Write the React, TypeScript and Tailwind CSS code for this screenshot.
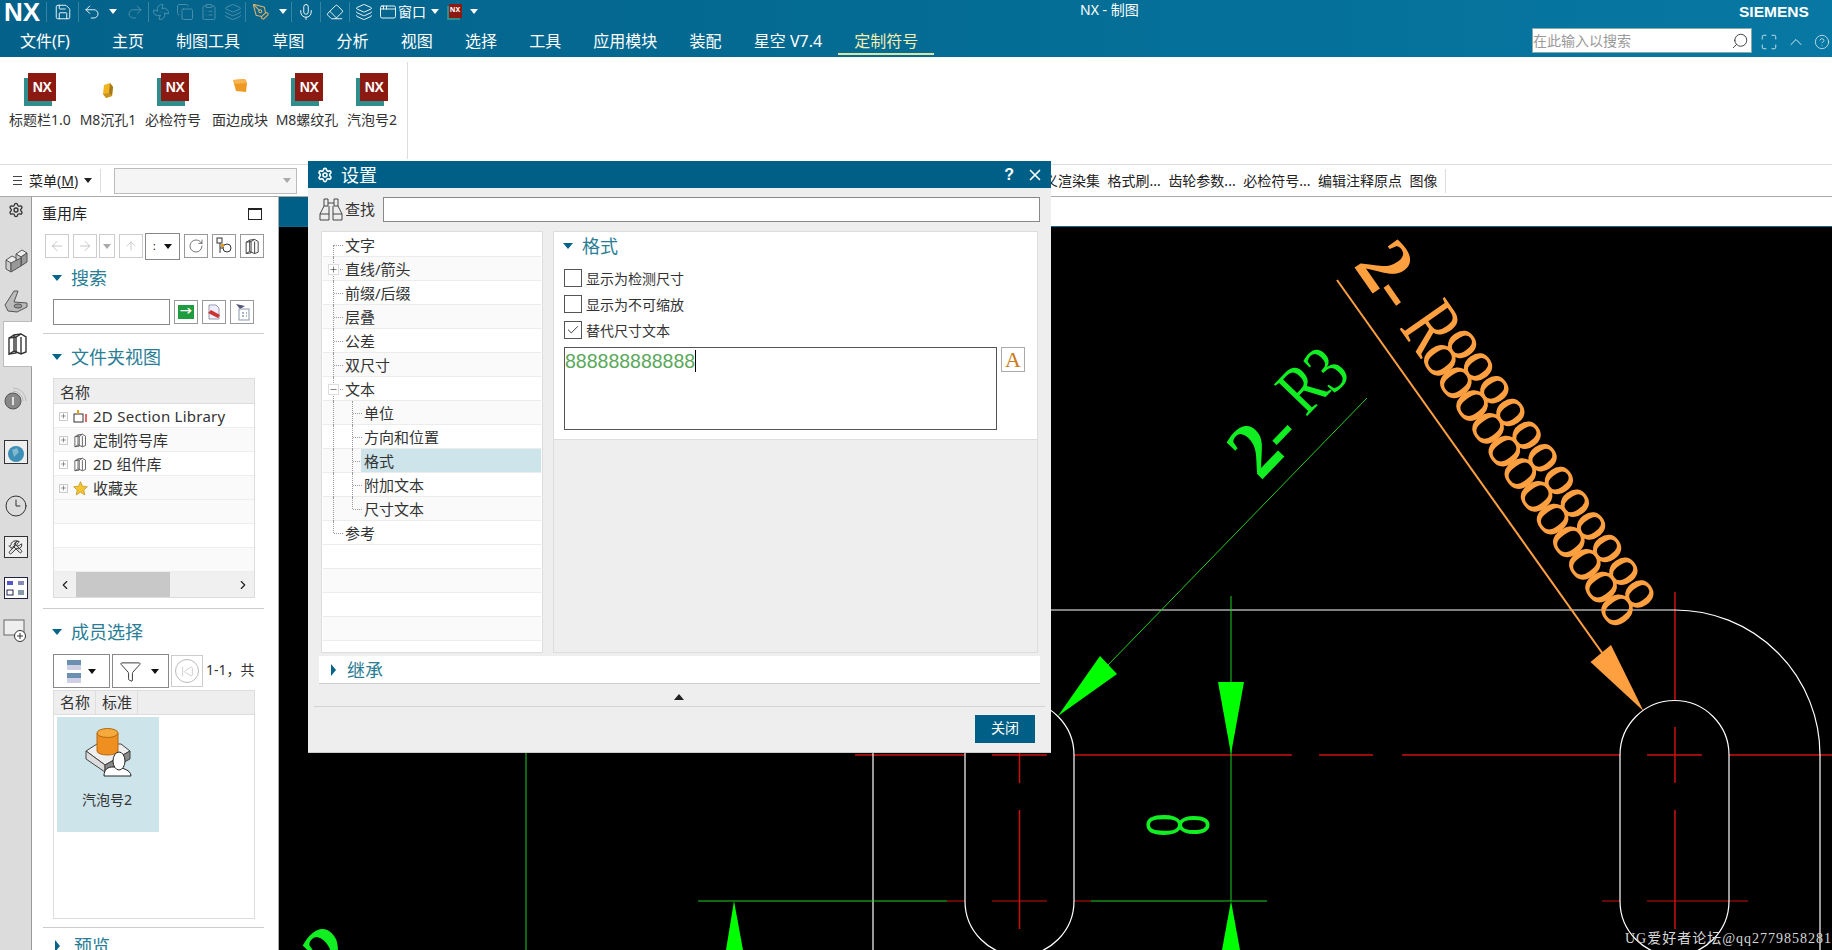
import { Save, Undo2, Redo2, Fan, Copy, ClipboardList, Mic, Eraser, Layers, AppWindow, PenTool, Search, Maximize, ChevronUp, CircleHelp, ChevronLeft, ChevronRight, Settings, X, RotateCw, ArrowLeft, ArrowRight, ArrowUp, Funnel, SkipBack, Check, Wrench, Hammer, Clock3, Plus, Minus } from "lucide-react";

const FONT = "[font-family:'Noto_Sans','Noto_Sans_CJK_SC',sans-serif]";

function Sep() {
	return <div className="w-px h-[20px] bg-white/20 shrink-0" />;
}

function Slot({ w, children, dim }: { w: string; children?: React.ReactNode; dim?: boolean }) {
	return <div className={`${w} flex justify-center items-center shrink-0 ${dim ? "opacity-30" : ""}`}>{children}</div>;
}

function Drop({ className = "border-t-white" }: { className?: string }) {
	return <div className={`w-0 h-0 border-x-[4px] border-x-transparent border-t-[5px] ${className}`} />;
}

function Tri({ open }: { open: boolean }) {
	return open ? (
		<div className="w-0 h-0 border-x-[5.5px] border-x-transparent border-t-[6px] border-t-[#04648a]" />
	) : (
		<div className="w-0 h-0 border-y-[6px] border-y-transparent border-l-[5px] border-l-[#04648a]" />
	);
}

function BookIcon({ size = 16, color = "#555" }: { size?: number; color?: string }) {
	return (
		<svg width={size} height={size} viewBox="0 0 24 24" fill="none" stroke={color} strokeWidth="1.4">
			<path d="M3 6 8 3 8 19 3 22Z" />
			<path d="M8 3 15 2 20 5 20 20 15 22 8 19" />
			<path d="M3 6 10 5 15 2M10 5V21L3 22M15 5V22" />
		</svg>
	);
}

function MiniNx({ big }: { big?: boolean }) {
	if (!big) {
		return (
			<div className="relative w-[15px] h-[16px]">
				<div className="absolute left-0 top-[2px] w-[13px] h-[14px] bg-[#2f8d8d]" />
				<div className="absolute left-[2px] top-0 w-[13px] h-[14px] bg-[#8c1a10] flex items-center justify-center text-white text-[7px] font-bold">NX</div>
			</div>
		);
	}
	return (
		<div className="relative w-[32px] h-[33px]">
			<div className="absolute left-0 top-[5px] w-[28px] h-[28px] bg-[#2f8d8d]" />
			<div className="absolute left-[4px] top-0 w-[28px] h-[28px] bg-[#8c1a10] flex items-center justify-center text-white text-[14px] font-bold tracking-[-0.5px] [font-family:'Liberation_Sans',sans-serif]">NX</div>
		</div>
	);
}

function TitleBar() {
	const ic = { size: 18, strokeWidth: 1.2, color: "#fff" };
	return (
		<div className="h-[23px] flex items-center pl-[4px] relative">
			<div className="w-[42px] h-[26px] text-white text-[26px] font-bold leading-[26px] [font-family:'Liberation_Sans',sans-serif]">NX</div>
			<Sep />
			<Slot w="w-[31px]"><Save {...ic} /></Slot>
			<Sep />
			<Slot w="w-[26px]"><Undo2 {...ic} /></Slot>
			<Slot w="w-[16px]"><Drop /></Slot>
			<Slot w="w-[27px]" dim><Redo2 {...ic} /></Slot>
			<Sep />
			<Slot w="w-[24px]" dim><Fan {...ic} /></Slot>
			<Slot w="w-[24px]" dim><Copy {...ic} /></Slot>
			<Slot w="w-[24px]" dim><ClipboardList {...ic} /></Slot>
			<Slot w="w-[24px]" dim><Layers {...ic} /></Slot>
			<Sep />
			<Slot w="w-[29px]"><PenTool size={18} strokeWidth={1.4} color="#e2b26c" /></Slot>
			<Slot w="w-[16px]"><Drop /></Slot>
			<Sep />
			<Slot w="w-[28px]"><Mic {...ic} /></Slot>
			<Sep />
			<Slot w="w-[28px]"><Eraser {...ic} /></Slot>
			<Sep />
			<Slot w="w-[28px]"><Layers {...ic} /></Slot>
			<Slot w="w-[20px]"><AppWindow {...ic} /></Slot>
			<div className="w-[30px] text-white text-[14px] leading-none shrink-0">窗口</div>
			<Slot w="w-[14px]"><Drop /></Slot>
			<Slot w="w-[24px]"><MiniNx /></Slot>
			<Slot w="w-[16px]"><Drop /></Slot>
			<div className="absolute left-[1080px] -top-[2px] h-[23px] flex items-center text-white text-[14px]">NX - 制图</div>
			<div className="absolute left-[1739px] top-0 h-[23px] flex items-center text-white text-[15.5px] font-bold [font-family:'Liberation_Sans',sans-serif]">SIEMENS</div>
		</div>
	);
}

function TabBar() {
	const tabs = ["主页", "制图工具", "草图", "分析", "视图", "选择", "工具", "应用模块", "装配", "星空 V7.4"];
	return (
		<div className="h-[34px] flex items-start pt-[6px] pl-[20px] text-white text-[16px] leading-[24px] relative">
			<div className="mr-[42px]">文件(F)</div>
			<div className="flex gap-[32.2px]">
				{tabs.map((t) => (
					<div key={t} className="whitespace-nowrap">{t}</div>
				))}
				<div className="relative text-[#f2eeb0]">
					定制符号
					<div className="absolute -left-[16px] -right-[16px] top-[24px] h-[2px] bg-[#d9e6a0]" />
				</div>
			</div>
			<div className="absolute left-[1532px] top-[5px] w-[220px] h-[25px] bg-white border border-[#8aa] flex items-center justify-between pr-[2px] text-[14px] text-[#999]">
				在此输入以搜索
				<Search size={18} strokeWidth={1.2} color="#333" className="-scale-x-100" />
			</div>
			<div className="absolute left-[1760px] top-[9px] flex items-center gap-[8px]">
				<Maximize size={18} strokeWidth={1} color="#fff" />
				<ChevronUp size={20} strokeWidth={1} color="#fff" />
				<CircleHelp size={16} strokeWidth={1} color="#fff" />
			</div>
		</div>
	);
}

function GoldBlock({ small }: { small?: boolean }) {
	return small ? (
		<svg width="14" height="18" viewBox="0 0 14 18" className="mt-[9px]">
			<path d="M3 3 9 1 12 5 11 14 5 16 2 12Z" fill="#f0b420" />
			<path d="M9 1 12 5 11 14 8 11Z" fill="#a5781a" />
			<path d="M2 12 8 11 11 14 5 16Z" fill="#c89320" />
		</svg>
	) : (
		<svg width="16" height="16" viewBox="0 0 16 16" className="mt-[5px]">
			<path d="M1 2 13 1 15 5 14 14 4 13Z" fill="#ee9a22" />
			<path d="M1 2 13 1 15 5 3 6Z" fill="#f7b450" />
		</svg>
	);
}

function Ribbon() {
	const items: [string, string, React.ReactNode][] = [
		["w-[66px]", "标题栏1.0", <MiniNx big />],
		["w-[70px]", "M8沉孔1", <GoldBlock small />],
		["w-[60px]", "必检符号", <MiniNx big />],
		["w-[74px]", "面边成块", <GoldBlock />],
		["w-[60px]", "M8螺纹孔", <MiniNx big />],
		["w-[70px]", "汽泡号2", <MiniNx big />],
	];
	return (
		<div className="h-[107px] flex bg-white pl-[7px]">
			{items.map(([w, label, icon], i) => (
				<div key={i} className={`${w} flex flex-col items-center pt-[16px]`}>
					<div className="h-[33px] flex items-start justify-center">
						{icon}
					</div>
					<div className="text-[14px] leading-[20px] mt-[4px] whitespace-nowrap text-[#333]">{label}</div>
				</div>
			))}
			<div className="w-px bg-[#ddd] my-[5px]" />
		</div>
	);
}

function Toolbar() {
	const labels = ["定义渲染集", "格式刷...", "齿轮参数...", "必检符号...", "编辑注释原点", "图像"];
	return (
		<div className="h-[33px] flex items-center bg-white border-y border-t-[#ddd] border-b-[#aaa] text-[14px] text-[#222] shrink-0">
			<div className="ml-[13px] flex flex-col gap-[3px] w-[9px]">
				<div className="h-px bg-[#444]" />
				<div className="h-px bg-[#444]" />
				<div className="h-px bg-[#444]" />
			</div>
			<div className="ml-[7px] whitespace-nowrap">菜单(<span className="underline">M</span>)</div>
			<div className="ml-[6px]"><Drop className="border-t-[#222]" /></div>
			<div className="ml-[8px] w-px h-[24px] bg-[#ddd]" />
			<div className="ml-[13px] w-[183px] h-[26px] border border-[#bbb] bg-[#f5f5f5] flex items-center justify-end pr-[5px]">
				<Drop className="border-t-[#aaa]" />
			</div>
			<div className="ml-[733px] flex gap-[7.5px] whitespace-nowrap">
				{labels.map((l) => (
					<div key={l}>{l}</div>
				))}
			</div>
			<div className="ml-[8px] w-px h-[24px] bg-[#ddd]" />
		</div>
	);
}

function NavRail() {
	return (
		<div className="w-[32px] shrink-0 bg-[#dcdcdc] border-r border-[#999] relative flex flex-col items-center">
			<div className="h-[25px] flex items-center"><Settings size={16} strokeWidth={2} color="#333" /></div>
			<div className="h-[46px] mt-[15px] flex items-center">
				<svg width="24" height="26" viewBox="0 0 24 26" stroke="#555" strokeWidth="1">
					<path d="M12 7 18 3 23 6 17 10Z" fill="#eee" />
					<path d="M17 10 23 6V15L17 19Z" fill="#999" />
					<path d="M12 7 17 10V19L12 16Z" fill="#ccc" />
					<path d="M2 13 8 9 12 11V16L7 19Z" fill="#eee" />
					<path d="M2 13 7 16V25L2 22Z" fill="#ccc" />
					<path d="M7 16 17 11V19L7 25Z" fill="#999" />
				</svg>
			</div>
			<div className="h-[36px] flex items-center">
				<svg width="26" height="26" viewBox="0 0 26 26"><path d="M2 17 11 3 15 3 11 14 24 15 24 19 14 24 5 23Z" fill="#bbb" stroke="#555" /><ellipse cx="15" cy="18" rx="4" ry="2" fill="#999" stroke="#555" /></svg>
			</div>
			<div className="h-[46px] w-[29px] ml-[3px] mt-[2px] bg-white border-y border-l border-[#bbb] flex items-center justify-center">
				<BookIcon size={24} color="#333" />
			</div>
			<div className="h-[62px] flex items-center">
				<svg width="24" height="24" viewBox="0 0 24 24"><circle cx="9" cy="15" r="8" fill="#888" stroke="#555" /><path d="M9 11v8" stroke="#fff" strokeWidth="1.5" /><path d="M9 2a13 13 0 0 1 13 13M9 5a10 10 0 0 1 10 10" stroke="#bbb" fill="none" /></svg>
			</div>
			<div className="h-[46px] flex items-center">
				<svg width="24" height="24" viewBox="0 0 24 24"><rect x="0.5" y="0.5" width="23" height="23" fill="#eee" stroke="#333" /><circle cx="12" cy="14" r="8" fill="#3d8fb5" /><path d="M8 10l5-2 2 4-5 5z" fill="#7fb8cf" /></svg>
			</div>
			<div className="h-[62px] flex items-center"><Clock3 size={24} strokeWidth={1} color="#333" /></div>
			<div className="h-[20px] flex items-center">
				<div className="relative w-[24px] h-[22px] bg-[#eee] border border-[#333] flex items-center justify-center">
					<Wrench size={15} strokeWidth={1.6} color="#333" />
					<Hammer size={15} strokeWidth={1.6} color="#333" className="absolute left-[3px] top-[2px] -scale-x-100" />
				</div>
			</div>
			<div className="h-[62px] flex items-center">
				<svg width="24" height="22" viewBox="0 0 24 22"><rect x="0.5" y="0.5" width="23" height="21" fill="#fff" stroke="#224" /><rect x="3" y="4" width="6" height="4" fill="#55c" /><rect x="14" y="4" width="6" height="4" fill="#88b" /><rect x="3" y="13" width="6" height="5" fill="#fff" stroke="#225" /><rect x="14" y="13" width="6" height="5" fill="#89a" /></svg>
			</div>
			<div className="h-[24px] flex items-center">
				<svg width="26" height="24" viewBox="0 0 26 24"><rect x="1" y="1" width="20" height="15" fill="#eee" stroke="#666" /><circle cx="17" cy="17" r="5.5" fill="#fff" stroke="#333" /><path d="M14 17h6M17 14v6" stroke="#333" /></svg>
			</div>
		</div>
	);
}

function SmallBtn({ children, faded, w = "w-[24px]" }: { children?: React.ReactNode; faded?: boolean; w?: string }) {
	return <div className={`${w} h-[24px] border ${faded ? "border-[#ccc]" : "border-[#999]"} flex items-center justify-center shrink-0 bg-white`}>{children}</div>;
}

function SectionHead({ title, open = true }: { title: string; open?: boolean }) {
	return (
		<div className="flex items-center h-[26px]">
			<div className="w-[20px] pl-[1px]"><Tri open={open} /></div>
			<div className="text-[18px] leading-[26px] text-[#2a7d94]">{title}</div>
		</div>
	);
}

function LeftPanel() {
	const rows: [string, React.ReactNode][] = [
		["2D Section Library", <svg width="15" height="16" viewBox="0 0 15 16"><rect x="1" y="6" width="9" height="8" fill="none" stroke="#333" /><path d="M5 6V2" stroke="#e0a020" strokeWidth="2" /><path d="M13 6v8" stroke="#d33" strokeWidth="1.5" /></svg>],
		["定制符号库", <BookIcon size={15} />],
		["2D 组件库", <BookIcon size={15} />],
		["收藏夹", <svg width="15" height="15" viewBox="0 0 24 24"><path d="M12 1l3.4 7.3 7.6.9-5.6 5.3 1.5 7.9L12 18l-6.9 4.400 1.500-7.900L1 9.200l7.600-.9z" fill="#f4c430" stroke="#b08a20" /></svg>],
	];
	return (
		<div className="w-[247px] shrink-0 bg-white border-r border-[#aaa] overflow-hidden relative">
			<div className="h-[31px] flex items-center justify-between pl-[10px] pr-[16px] text-[15px] text-[#222] pt-[2px]">
				重用库
				<div className="w-[14px] h-[12px] border border-[#222] border-t-2" />
			</div>
			<div className="flex items-center pl-[13px] h-[28px] mt-[4px]">
				<SmallBtn faded><ArrowLeft size={16} strokeWidth={1} color="#aaa" /></SmallBtn>
				<div className="w-[4px]" />
				<SmallBtn faded><ArrowRight size={16} strokeWidth={1} color="#aaa" /></SmallBtn>
				<div className="w-[2px]" />
				<SmallBtn faded w="w-[16px]"><Drop className="border-t-[#aaa]" /></SmallBtn>
				<div className="w-[4px]" />
				<SmallBtn faded><ArrowUp size={14} strokeWidth={1} color="#aaa" /></SmallBtn>
				<div className="w-[2px]" />
				<div className="w-[35px] h-[27px] border border-[#888] flex items-center justify-around px-[3px] shrink-0">
					<span className="text-[10px] leading-none">:</span>
					<Drop className="border-t-[#111]" />
				</div>
				<div className="w-[4px]" />
				<SmallBtn><RotateCw size={16} strokeWidth={1} color="#333" /></SmallBtn>
				<div className="w-[4px]" />
				<SmallBtn><svg width="18" height="18" viewBox="0 0 18 18"><rect x="2" y="1" width="5" height="5" fill="#fff" stroke="#333" /><path d="M5 6v10M5 11h5" stroke="#333" /><circle cx="12" cy="11" r="4" fill="#fff" stroke="#333" /><rect x="6" y="7" width="3" height="3" fill="#e0a020" /></svg></SmallBtn>
				<div className="w-[4px]" />
				<SmallBtn><BookIcon size={17} color="#444" /></SmallBtn>
			</div>
			<div className="mt-[5px] pl-[19px]"><SectionHead title="搜索" /></div>
			<div className="flex items-center pl-[21px] gap-[4px] mt-[8px]">
				<div className="w-[117px] h-[26px] border border-[#888]" />
				<SmallBtn><div className="w-[16px] h-[14px] bg-[#1f9c3d] text-white text-[12px] leading-[13px] text-center font-bold">→</div></SmallBtn>
				<SmallBtn><svg width="16" height="16" viewBox="0 0 16 16"><path d="M3 1h7l3 3v11H3z" fill="#eef" stroke="#99a" /><path d="M2 9l10 5 2-3L5 6z" fill="#c33" /></svg></SmallBtn>
				<SmallBtn><svg width="18" height="18" viewBox="0 0 18 18"><path d="M3 1l9 2-5 3z" fill="#557" /><rect x="6" y="6" width="10" height="11" fill="#fff" stroke="#89a" /><path d="M9 10h2M13 10h1M9 13h2M13 13h1" stroke="#568" /></svg></SmallBtn>
			</div>
			<div className="h-px bg-[#ccc] ml-[11px] mr-[14px] mt-[8px]" />
			<div className="mt-[10px] pl-[19px]"><SectionHead title="文件夹视图" /></div>
			<div className="ml-[21px] w-[202px] h-[220px] mt-[8px] border border-[#ddd] bg-white flex flex-col text-[15px] text-[#333]">
				<div className="h-[25px] bg-[#eee] border-b border-[#ddd] pl-[6px] leading-[26px] shrink-0">名称</div>
				{rows.map(([label, icon], i) => (
					<div key={i} className={`h-[24px] shrink-0 flex items-center border-b border-[#eee] pt-[1px] ${i % 2 ? "bg-[#fafafa]" : ""}`}>
						<div className="ml-[5px] w-[9px] h-[9px] border border-[#ccc] flex items-center justify-center"><Plus size={8} strokeWidth={1.5} color="#222" /></div>
						<div className="w-[25px] flex justify-center">{icon}</div>
						<div className={`whitespace-nowrap ${i === 0 ? "tracking-[0.25px]" : ""}`}>{label}</div>
					</div>
				))}
				{[0, 1, 2].map((i) => (
					<div key={i} className={`h-[24px] shrink-0 border-b border-[#eee] ${i % 2 ? "" : "bg-[#fafafa]"}`} />
				))}
				<div className="flex-1 bg-[#f0f0f0] flex items-center">
					<div className="w-[22px] flex justify-center"><ChevronLeft size={14} strokeWidth={2} color="#222" /></div>
					<div className="w-[94px] h-full bg-[#c8c8c8]" />
					<div className="flex-1" />
					<div className="w-[22px] flex justify-center"><ChevronRight size={14} strokeWidth={2} color="#222" /></div>
				</div>
			</div>
			<div className="h-px bg-[#ccc] ml-[11px] mr-[14px] mt-[10px]" />
			<div className="mt-[10px] pl-[19px]"><SectionHead title="成员选择" /></div>
			<div className="flex items-center pl-[21px] gap-[2px] mt-[9px] text-[14px] text-[#333]">
				<div className="w-[57px] h-[34px] border border-[#888] flex items-center justify-around px-[10px]">
					<svg width="14" height="23" viewBox="0 0 14 23"><rect width="14" height="10" fill="#6a8fb0" /><rect y="5" width="14" height="5" fill="#cfcfe6" /><rect y="13" width="14" height="10" fill="#6a8fb0" /><rect y="18" width="14" height="5" fill="#cfcfe6" /></svg>
					<Drop className="border-t-[#111]" />
				</div>
				<div className="w-[57px] h-[34px] border border-[#888] flex items-center justify-between pl-[6px] pr-[9px]">
					<Funnel size={23} strokeWidth={1} color="#333" />
					<Drop className="border-t-[#111]" />
				</div>
				<div className="w-[32px] h-[32px] border border-[#ccc] flex items-center justify-center">
					<div className="w-[24px] h-[24px] rounded-full border border-[#bbb] flex items-center justify-center"><SkipBack size={13} strokeWidth={1} color="#aaa" /></div>
				</div>
				<div className="w-[49px] overflow-hidden whitespace-nowrap ml-[1px] -mt-[4px]">1-1，共 1</div>
			</div>
			<div className="ml-[21px] w-[202px] h-[229px] mt-[2px] border border-[#ddd] flex flex-col text-[15px] text-[#333]">
				<div className="h-[24px] bg-[#eee] border-b border-[#ddd] flex shrink-0 leading-[23px]">
					<div className="w-[42px] pl-[6px] border-r border-[#ddd]">名称</div>
					<div className="w-[42px] pl-[6px] border-r border-[#ddd]">标准</div>
				</div>
				<div className="ml-[3px] mt-[2px] w-[102px] h-[115px] bg-[#cde4ea] flex flex-col items-center">
					<div className="mt-[10px]">
						<svg width="50" height="50" viewBox="0 0 50 50">
							<path d="M3 24 14 17 38 17 47 24 22 38Z" fill="#eee" stroke="#444" />
							<path d="M3 24v8l19 13V38Z" fill="#ddd" stroke="#444" />
							<path d="M22 38 47 24v8L22 45Z" fill="#888" stroke="#444" />
							<path d="M14 6v18a10.500 4 0 0 0 21 0V6Z" fill="#ee8f1f" stroke="#b56a10" />
							<ellipse cx="24.500" cy="6" rx="10.500" ry="4.500" fill="#f6a93c" stroke="#b56a10" />
							<path d="M21 49c0-7 4-9 9-9 6 0 18 2 18 9Z" fill="#fff" stroke="#222" />
							<ellipse cx="36" cy="34" rx="6" ry="9" fill="#fff" stroke="#222" />
						</svg>
					</div>
					<div className="mt-[12px] text-[14px] text-[#333] -ml-[2px]">汽泡号2</div>
				</div>
			</div>
			<div className="h-px bg-[#ccc] ml-[11px] mr-[14px] mt-[8px]" />
			<div className="mt-[5px] pl-[22px]"><SectionHead title="预览" open={false} /></div>
		</div>
	);
}

function Drawing() {
	return (
		<svg className="w-full h-full block" viewBox="279 227 1553 723" fill="none">
			<g stroke="#cc1111" strokeWidth="1.500">
				<path d="M1074 755H1292M1319 755H1373M1402 755H1620M1647 755H1702M1729 755H1832M855 755H965M992 755H1047" />
				<path d="M947 901H965M992 901H1047M1074 901H1091M1602 901H1620M1647 901H1748" strokeWidth="1" />
				<path d="M1019.500 752V783M1019.500 810V929M1675 592V700M1675 727V783M1675 810V929" />
			</g>
			<g stroke="#fff" strokeWidth="1.200">
				<path d="M1050 610H1675A145 145 0 0 1 1820 755V950" />
				<path d="M1620 755A54.500 54.500 0 0 1 1729 755V901A54.500 54.500 0 0 1 1620 901Z" />
				<path d="M965 755A54.500 54.500 0 0 1 1074 755V901A54.500 54.500 0 0 1 965 901Z" />
				<path d="M873 752V950" />
			</g>
			<g stroke="#1fd01f" strokeWidth="1">
				<path d="M526 752V950M698 901H947M1091 901H1267M1231 596V901M1367 398 1108 665" />
			</g>
			<g fill="#00ff00">
				<path d="M1218 682H1244L1231 754Z" />
				<path d="M734 901L726 950H743Z" />
				<path d="M1231 901L1222 950H1240Z" />
				<path d="M1058 716 1100 656 1117 674Z" />
			</g>
			<g fontFamily="'Liberation Serif',serif" textAnchor="middle" dominantBaseline="central">
				<g fill="#11ee22">
					<text transform="translate(1254 449) rotate(-46) scale(0.95 1)" fontSize="80" fontWeight="700">2</text>
					<text transform="translate(1277 430) rotate(-46) scale(1.2 1)" fontSize="70" fontWeight="700">-</text>
					<text transform="translate(1302 388) rotate(-46) scale(0.8 1)" fontSize="70">R</text>
					<text transform="translate(1326 369) rotate(-46) scale(0.8 1)" fontSize="70">3</text>
					<text transform="translate(1180 825) rotate(90) scale(0.5 1)" fontSize="94">8</text>
					<text transform="translate(330 952) rotate(-46) scale(0.95 1)" fontSize="80" fontWeight="700">2</text>
				</g>
				<g fill="#ffa040">
					<text transform="translate(1386 265) rotate(55) scale(0.95 1)" fontSize="80" fontWeight="700">2</text>
					<text transform="translate(1398 291) rotate(55) scale(1.2 1)" fontSize="70" fontWeight="700">-</text>
					<text transform="translate(1433 327) rotate(55) scale(0.7 1)" fontSize="84">R</text>
					<text transform="translate(1538.300 474.400) rotate(54.600) scale(0.8 1)" fontSize="84" letterSpacing="-7.200">888888888888</text>
				</g>
			</g>
			<path d="M1337 280 1620 678" stroke="#ffa040" strokeWidth="2" />
			<path d="M1643.500 711 1611 645 1590.500 662Z" fill="#ffa040" />
			<text x="1625" y="943" fontSize="14" fill="#d8d8d8" letterSpacing="1" fontFamily="'Liberation Serif','Noto Sans CJK SC',serif">UG爱好者论坛@qq2779858281</text>
		</svg>
	);
}

function Viewport() {
	return (
		<div className="flex-1 flex flex-col min-w-0">
			<div className="h-[30px] bg-white border-b border-[#0a6a8e] shrink-0 flex">
				<div className="w-[29px] bg-[#005f86]" />
			</div>
			<div className="flex-1 bg-black min-h-0">
				<Drawing />
			</div>
		</div>
	);
}

type Node = { label: string; level: number; exp?: "+" | "-"; sel?: boolean; last?: boolean; trunk?: boolean };

function TreeRow({ n, i }: { n: Node; i: number }) {
	return (
		<div className={`h-[24px] relative border-b border-[#ececec] ${i % 2 ? "bg-[#fafafa]" : "bg-white"}`}>
			<div className={`absolute left-[10px] w-px border-l border-dotted border-[#999] ${n.last ? "top-0 h-[12px]" : i === 0 ? "top-[12px] h-[12px]" : "top-0 h-[24px]"}`} />
			{n.level === 2 && <div className={`absolute left-[29px] w-px border-l border-dotted border-[#999] top-0 ${n.trunk ? "h-[12px]" : "h-[24px]"}`} />}
			<div className={`absolute top-[12px] border-t border-dotted border-[#999] w-[9px] ${n.level === 2 ? "left-[30px]" : "left-[11px]"}`} />
			{n.exp && (
				<div className="absolute left-[5px] top-[7px] w-[11px] h-[11px] bg-white border border-[#ddd] flex items-center justify-center">
					{n.exp === "+" ? <Plus size={9} strokeWidth={1.5} color="#222" /> : <Minus size={9} strokeWidth={1.5} color="#222" />}
				</div>
			)}
			{n.sel && <div className="absolute left-[38px] right-0 top-0 bottom-0 bg-[#cde4ea]" />}
			<div className={`absolute top-0 text-[15px] leading-[24px] text-[#333] whitespace-nowrap ${n.level === 2 ? "left-[41px]" : "left-[22px]"}`}>{n.label}</div>
		</div>
	);
}

function SettingsDialog() {
	const nodes: Node[] = [
		{ label: "文字", level: 1 },
		{ label: "直线/箭头", level: 1, exp: "+" },
		{ label: "前缀/后缀", level: 1 },
		{ label: "层叠", level: 1 },
		{ label: "公差", level: 1 },
		{ label: "双尺寸", level: 1 },
		{ label: "文本", level: 1, exp: "-" },
		{ label: "单位", level: 2 },
		{ label: "方向和位置", level: 2 },
		{ label: "格式", level: 2, sel: true },
		{ label: "附加文本", level: 2 },
		{ label: "尺寸文本", level: 2, trunk: true },
		{ label: "参考", level: 1, last: true },
	];
	return (
		<div className="absolute left-[308px] top-[161px] w-[743px] h-[592px] bg-[#eeeeee] flex flex-col border-b border-[#ccc]">
			<div className="h-[27px] bg-[#005f86] flex items-center text-white shrink-0">
				<Settings size={16} strokeWidth={2.4} color="#fff" className="ml-[9px]" />
				<div className="ml-[8px] text-[18px] leading-none">设置</div>
				<div className="ml-auto text-[16px] font-bold [font-family:'Liberation_Sans',sans-serif] mr-[12px]">?</div>
				<X size={18} strokeWidth={2.2} color="#fff" className="mr-[7px]" />
			</div>
			<div className="flex items-center h-[25px] mt-[9px] shrink-0 text-[15px] text-[#333]">
				<svg className="ml-[11px]" width="24" height="23" viewBox="0 0 24 23" fill="none" stroke="#444"><path d="M5 1h4v7H5zM15 1h4v7h-4zM9 5h6M5 8 1 16v6h9V8M19 8l4 8v6h-9V8M1 16h9M14 16h9" /></svg>
				<div className="ml-[2px]">查找</div>
				<div className="ml-[8px] w-[657px] h-[25px] bg-white border border-[#888]" />
			</div>
			<div className="flex mt-[9px] h-[422px] shrink-0">
				<div className="ml-[13px] w-[222px] h-full bg-white border border-[#ddd] pt-[1px] px-px overflow-hidden">
					{nodes.map((n, i) => (
						<TreeRow key={n.label} n={n} i={i} />
					))}
					{[0, 1, 2, 3, 4].map((i) => (
						<div key={i} className={`h-[24px] border-b border-[#ececec] ${i % 2 ? "bg-[#fafafa]" : "bg-white"}`} />
					))}
				</div>
				<div className="ml-[10px] w-[485px] h-full border border-[#ddd] flex flex-col">
					<div className="h-[208px] bg-white border-b border-[#ddd] shrink-0 pl-[8px]">
						<div className="pt-[1px]"><SectionHead title="格式" /></div>
						<div className="mt-[10px] flex flex-col gap-[8px] pl-[2px] text-[14px] text-[#333]">
							{[["显示为检测尺寸", false], ["显示为不可缩放", false], ["替代尺寸文本", true]].map(([t, on]) => (
								<div key={t as string} className="h-[18px] flex items-center gap-[4px]">
									<div className="w-[18px] h-[18px] border border-[#555] flex items-center justify-center">
										{on && <Check size={14} strokeWidth={1.6} color="#333" />}
									</div>
									{t as string}
								</div>
							))}
						</div>
						<div className="flex mt-[8px] pl-[2px]">
							<div className="w-[433px] h-[83px] border border-[#555] bg-white text-[#5aa85a] text-[19.500px] leading-[26px] [font-family:'Liberation_Sans',sans-serif] flex items-start">
								888888888888
								<div className="w-px h-[22px] bg-black mt-[2px]" />
							</div>
							<div className="ml-[4px] w-[24px] h-[25px] border border-[#aaa] bg-white flex items-center justify-center text-[#c97a1a] text-[22px] leading-none [font-family:'Liberation_Serif',serif]">A</div>
						</div>
					</div>
				</div>
			</div>
			<div className="ml-[11px] w-[721px] h-[28px] mt-[3px] bg-white border-b border-[#ccc] flex items-center pl-[12px] shrink-0">
				<div className="w-[16px]"><Tri open={false} /></div>
				<div className="text-[18px] leading-none text-[#2a7d94]">继承</div>
			</div>
			<div className="h-[22px] flex items-center justify-center shrink-0 pt-[4px] pr-[2px]">
				<div className="w-0 h-0 border-x-[5.500px] border-x-transparent border-b-[6px] border-b-[#222]" />
			</div>
			<div className="ml-[6px] w-[731px] h-px bg-[#d4d4d4] shrink-0" />
			<div className="flex justify-end pr-[16px] mt-[8px]">
				<div className="w-[60px] h-[28px] bg-[#005f86] text-white text-[14px] leading-[26px] text-center">关闭</div>
			</div>
		</div>
	);
}

export default function App() {
	return (
		<div className={`w-[1832px] h-[950px] relative overflow-hidden bg-white ${FONT}`}>
			<div className="h-[57px] bg-gradient-to-r from-[#04628a] via-[#046c94] to-[#0778a3]">
				<TitleBar />
				<TabBar />
			</div>
			<Ribbon />
			<Toolbar />
			<div className="flex h-[753px] overflow-hidden">
				<NavRail />
				<LeftPanel />
				<Viewport />
			</div>
			<SettingsDialog />
		</div>
	);
}
